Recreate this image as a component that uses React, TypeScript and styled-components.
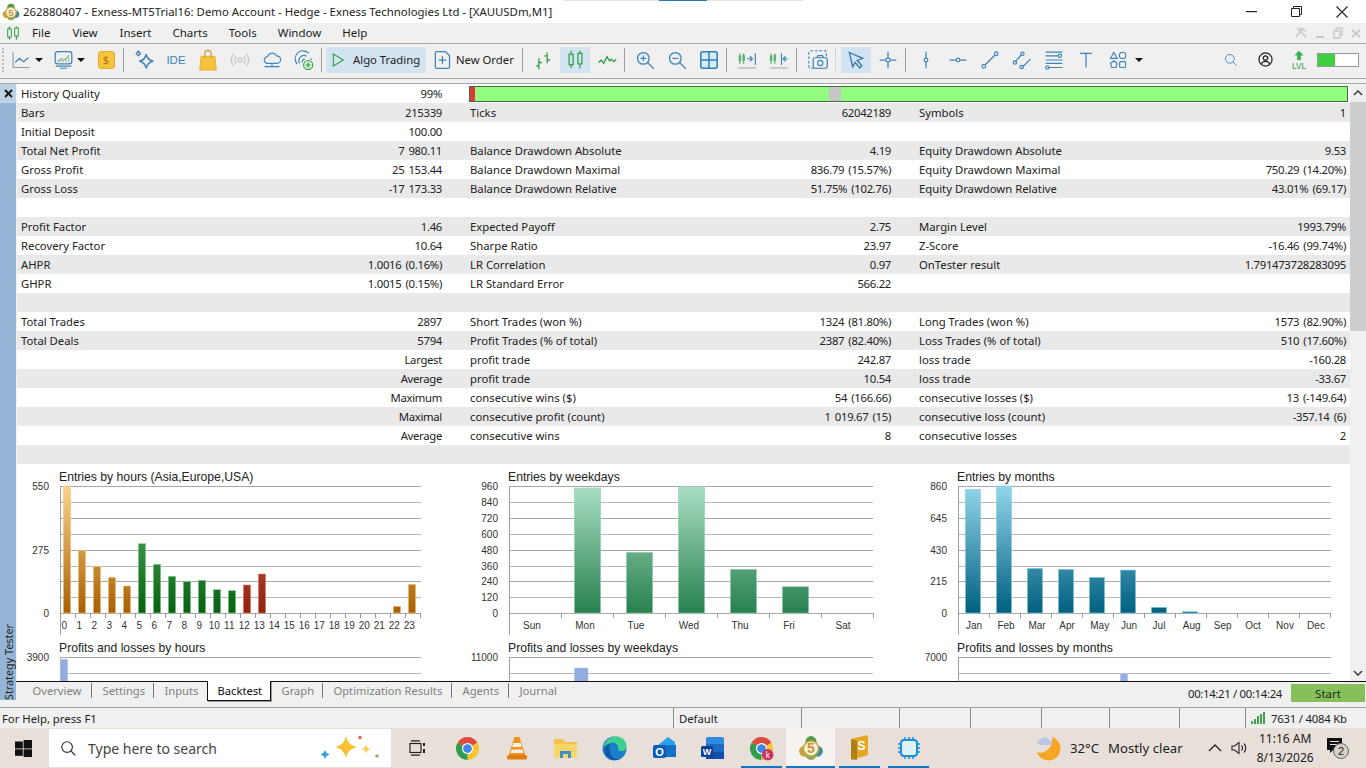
import React from "react";
import styled, { createGlobalStyle } from "styled-components";

const UI_FONT = `"Noto Sans", "Liberation Sans", sans-serif`;
const BLUE = "#3f83b8";
const GREEN = "#2f9e44";

const Global = createGlobalStyle`
    html, body { margin: 0; padding: 0; background: #f0f0f0; }
    body { width: 1366px; height: 768px; overflow: hidden; font-family: ${UI_FONT}; }
`;

const Page = styled.div`
    position: relative;
    display: flex;
    flex-direction: column;
    width: 1366px;
    height: 768px;
    overflow: hidden;
`;

/* leftover of another window along the top edge */
const TopEdge = styled.div`
    position: absolute;
    top: 0;
    left: 563px;
    width: 240px;
    height: 1px;
    background: linear-gradient(90deg, #e4e4e4 40%, #2a7ab8 40%, #2a7ab8 60%, #e4e4e4 60%);
`;

/* Title */
const TitleBar = styled.div`
    display: flex;
    align-items: center;
    height: 23px;
    flex: none;
    background: #fff;
    padding-left: 2px;
`;
const TitleText = styled.span`
    margin-left: 3px;
    font-size: 11.4px;
    color: #222;
    white-space: nowrap;
`;
const WinButtons = styled.div`
    margin-left: auto;
    display: flex;
    padding-right: 2px;
`;
const WinButton = styled.div`
    width: 45px;
    height: 23px;
    display: flex;
    align-items: center;
    justify-content: center;
`;

/* Menu */
const MenuBar = styled.div`
    display: flex;
    align-items: center;
    height: 19px;
    padding: 0 0 1px 7px;
    flex: none;
    background: #f0f0f0;
    border-bottom: 1px solid #a8a8a8;
`;
const MenuItem = styled.span<{ $ml: number }>`
    font-size: 11.5px;
    color: #222;
    margin-left: ${({ $ml }) => $ml}px;
`;
const MdiButtons = styled.div`
    margin-left: auto;
    display: flex;
    align-items: center;
    gap: 8px;
    padding-right: 5px;
`;

/* Toolbar */
const ToolBar = styled.div`
    display: flex;
    align-items: center;
    height: 31px;
    padding-bottom: 3px;
    flex: none;
    background: #f0f0f0;
    border-bottom: 1px solid #a8a8a8;
`;
const Grip = styled.div`
    width: 2px;
    height: 24px;
    margin: 0 2px 0 2px;
    border-left: 2px dotted #bbb;
`;
const ToolButton = styled.div<{ $active?: boolean; $w?: number; $ml?: number }>`
    box-sizing: border-box;
    flex: none;
    width: ${({ $w }) => $w ?? 32}px;
    height: 26px;
    margin-left: ${({ $ml }) => $ml ?? 0}px;
    display: flex;
    align-items: center;
    justify-content: center;
    border: 0 solid transparent;
    border-width: 0 1px;
    background-clip: padding-box;
    background-color: ${({ $active }) => ($active ? "#d2e3f1" : "transparent")};
`;
const Caret = styled.div<{ $w: number }>`
    flex: none;
    width: ${({ $w }) => $w}px;
    display: flex;
    justify-content: center;
    &::before {
        content: "";
        border: 4px solid transparent;
        border-top: 4px solid #111;
        border-bottom: 0;
    }
`;
const Sep = styled.div<{ $dashed?: boolean }>`
    flex: none;
    width: 0;
    height: 24px;
    margin: 0 4px 0 1px;
    border-left: 1px ${({ $dashed }) => ($dashed ? "dotted #bbb" : "solid #a0a0a0")};
`;
const DollarBox = styled.div`
    width: 17px;
    height: 18px;
    border-radius: 3px;
    background: #f8c43e;
    border: 1px solid #e5a92c;
    box-sizing: border-box;
    display: flex;
    align-items: center;
    justify-content: center;
    font-size: 11px;
    color: #a8761c;
`;
const IdeLabel = styled.span`
    font-size: 11.5px;
    color: ${BLUE};
    font-family: "Liberation Sans", sans-serif;
`;
const TextTool = styled.div<{ $active?: boolean; $w: number; $ml: number; $pad: number; $gap: number }>`
    box-sizing: border-box;
    flex: none;
    width: ${({ $w }) => $w}px;
    height: 26px;
    margin-left: ${({ $ml }) => $ml}px;
    padding-left: ${({ $pad }) => $pad}px;
    display: flex;
    align-items: center;
    gap: ${({ $gap }) => $gap}px;
    font-size: 11.3px;
    color: #222;
    white-space: nowrap;
    background: ${({ $active }) => ($active ? "#d2e3f1" : "transparent")};
`;
const RightTools = styled.div`
    margin-left: auto;
    display: flex;
    align-items: center;
    gap: 2px;
    padding-right: 7px;
`;
const LevelBar = styled.div`
    box-sizing: border-box;
    width: 42px;
    height: 14px;
    border: 1px solid #999;
    background: #fff;
    &::before {
        content: "";
        display: block;
        width: 43%;
        height: 100%;
        background: #3ed03e;
    }
`;
const ToolGap = styled.div`
    height: 4px;
    flex: none;
    background: #f0f0f0;
`;

/* Tester */
const Tester = styled.div`
    display: flex;
    height: 623px;
    flex: none;
    border-top: 1px solid #a8a8a8;
    background: #f0f0f0;
`;
const SideStrip = styled.div`
    flex: none;
    width: 16px;
    height: 616px;
    margin-right: 1px;
    background: #95b5d6;
    display: flex;
    flex-direction: column;
    justify-content: space-between;
    align-items: center;
`;
const CloseCell = styled.div`
    width: 16px;
    height: 19px;
    display: flex;
    align-items: center;
    justify-content: center;
    background: #bdd0e4;
`;
const SideLabel = styled.span`
    writing-mode: vertical-rl;
    transform: rotate(180deg);
    font-size: 10.8px;
    color: #222;
    white-space: nowrap;
`;
const TesterBody = styled.div`
    flex: 1;
    min-width: 0;
    display: flex;
    flex-direction: column;
`;
const ReportArea = styled.div`
    display: flex;
    height: 597px;
    flex: none;
    background: #fff;
`;
const Report = styled.div`
    width: 1333px;
    flex: none;
    overflow: hidden;
`;
const Row = styled.div<{ $odd: boolean }>`
    display: grid;
    grid-template-columns: 449px 449px 435px;
    height: 19px;
    background: ${({ $odd }) => ($odd ? "#e9e9e9" : "#fff")};
`;
const Cell = styled.div<{ $last?: boolean }>`
    display: flex;
    justify-content: space-between;
    align-items: center;
    padding: 0 ${({ $last }) => ($last ? 4 : 24)}px 0 4px;
    font-size: 11.3px;
    color: #222;
    white-space: nowrap;
`;
const Value = styled.span`
    letter-spacing: -0.3px;
    word-spacing: 1.5px;
`;
const QualityBar = styled.div`
    grid-column: span 2;
    margin: 2px 2px 1px 3px;
    border: 1px solid #3f6f3f;
    background: linear-gradient(
        90deg,
        #e23a36 0,
        #e23a36 5px,
        #93fb7f 5px,
        #93fb7f 359px,
        #c6c6c6 359px,
        #c6c6c6 371px,
        #93fb7f 371px
    );
`;
const ChartGrid = styled.div`
    display: grid;
    grid-template-columns: 449px 449px 435px;
    grid-auto-rows: 171px;
`;
const ChartSvg = styled.svg`
    display: block;
    font-family: "Liberation Sans", sans-serif;
`;
const ScrollBar = styled.div`
    flex: none;
    width: 16px;
    display: flex;
    flex-direction: column;
    align-items: center;
    justify-content: space-between;
    background: #f0f0f0;
`;
const ScrollThumb = styled.div`
    width: 16px;
    height: 229px;
    margin-top: 1px;
    background: #cdcdcd;
`;
const ScrollArrow = styled.div`
    height: 17px;
    display: flex;
    align-items: center;
    justify-content: center;
`;
const ScrollTop = styled.div`
    display: flex;
    flex-direction: column;
`;

/* Tabs */
const TabBar = styled.div`
    display: flex;
    align-items: flex-start;
    height: 25px;
    flex: none;
    margin-left: -1px;
    border-top: 1px solid #111;
    padding-left: 6px;
    background: #f0f0f0;
`;
const Tab = styled.div<{ $w: number; $current?: boolean; $sep?: boolean }>`
    box-sizing: border-box;
    flex: none;
    width: ${({ $w }) => $w}px;
    height: ${({ $current }) => ($current ? 20 : 15)}px;
    margin-top: ${({ $current }) => ($current ? -1 : 1)}px;
    padding-left: ${({ $current }) => ($current ? 9.5 : 10.5)}px;
    display: flex;
    align-items: center;
    font-size: 11.2px;
    white-space: nowrap;
    color: ${({ $current }) => ($current ? "#111" : "#808080")};
    background: ${({ $current }) => ($current ? "#fff" : "transparent")};
    border-right: 1px solid ${({ $sep }) => ($sep ? "#777" : "transparent")};
    ${({ $current }) => ($current ? "border: 1px solid #111; border-top: 0; box-shadow: 1px 1px 0 #999;" : "")}
`;
const TabRight = styled.div`
    margin-left: auto;
    display: flex;
    align-items: center;
    gap: 9px;
    padding: 2px 1px 0 0;
`;
const Timer = styled.span`
    font-size: 11.3px;
    letter-spacing: -0.3px;
    color: #222;
`;
const StartButton = styled.div`
    width: 74px;
    height: 18px;
    display: flex;
    align-items: center;
    justify-content: center;
    font-size: 11.5px;
    color: #1c2c14;
    background: #87c05a;
`;

/* Status */
const StatusBar = styled.div`
    display: flex;
    height: 20px;
    flex: none;
    background: #f0f0f0;
    border-top: 1px solid #a0a0a0;
`;
const StatusCell = styled.div<{ $w: number }>`
    box-sizing: border-box;
    flex: none;
    width: ${({ $w }) => $w}px;
    display: flex;
    align-items: center;
    gap: 6px;
    padding-left: 5px;
    font-size: 11.3px;
    color: #222;
    white-space: nowrap;
    border-left: 1px solid #8c8c8c;
    &:first-child {
        border-left: 0;
        padding-left: 2px;
    }
`;
const MemoryText = styled.span`
    letter-spacing: -0.2px;
`;

/* Taskbar */
const TaskBar = styled.div`
    display: flex;
    align-items: stretch;
    height: 40px;
    flex: none;
    background: #e8dfd9;
`;
const StartCell = styled.div`
    flex: none;
    width: 49px;
    display: flex;
    align-items: center;
    justify-content: center;
    padding-right: 2px;
    box-sizing: border-box;
`;
const SearchBox = styled.div`
    box-sizing: border-box;
    flex: none;
    width: 342px;
    margin: 1px 0;
    padding: 0 9px 0 11px;
    display: flex;
    align-items: center;
    background: #fff;
    font-size: 14px;
    color: #444;
`;
const SearchText = styled.span`
    margin-left: 11px;
    margin-right: auto;
`;
const TaskSlot = styled.div<{ $w?: number; $open?: boolean; $current?: boolean }>`
    position: relative;
    flex: none;
    width: ${({ $w }) => $w ?? 49}px;
    display: flex;
    align-items: center;
    justify-content: center;
    background: ${({ $current }) => ($current ? "#f6f2ef" : "transparent")};
    &::after {
        content: "";
        display: ${({ $open }) => ($open ? "block" : "none")};
        position: absolute;
        left: ${({ $current }) => ($current ? 0 : 4)}px;
        right: ${({ $current }) => ($current ? 0 : 4)}px;
        bottom: 0;
        height: 2px;
        background: #0a78c8;
    }
`;
const Tray = styled.div`
    flex: 1;
    display: flex;
    align-items: center;
    padding-left: 102px;
    font-size: 13.2px;
    color: #222;
    white-space: nowrap;
`;
const TrayText = styled.span<{ $ml: number }>`
    margin-left: ${({ $ml }) => $ml}px;
`;
const TrayIcon = styled.div<{ $ml: number }>`
    margin-left: ${({ $ml }) => $ml}px;
    display: flex;
    align-items: center;
`;
const Clock = styled.div`
    margin-left: 11px;
    width: 53px;
    display: flex;
    flex-direction: column;
    align-items: center;
    gap: 2px;
    font-size: 12px;
    line-height: 17px;
`;

/* ---------- toolbar icons ---------- */
const Line = ({ d, c = BLUE, w = 1.4 }: { d: string; c?: string; w?: number }) => (
    <path d={d} fill="none" stroke={c} strokeWidth={w} />
);
const Ic = ({ s = 20, children }: { s?: number; children: React.ReactNode }) => (
    <svg width={s} height={s} viewBox="0 0 24 24">{children}</svg>
);

const Mt5Logo = ({ s = 24 }: { s?: number }) => (
    <svg width={s} height={s} viewBox="0 0 24 24">
        <circle cx="6" cy="15" r="5" fill="#c9a33a" />
        <circle cx="18" cy="15" r="5" fill="#3d8f9e" />
        <circle cx="12" cy="6" r="5" fill="#4f9a4a" />
        <circle cx="12" cy="18" r="5" fill="#8aa65a" />
        <circle cx="12" cy="12.5" r="7" fill="#f6f2e6" stroke="#c9a33a" strokeWidth="1.4" />
        <text x="12" y="17" textAnchor="middle" fontSize="13" fontWeight="700" fill="#c8962a" fontFamily="Liberation Sans">5</text>
    </svg>
);
const MenuCandles = () => (
    <svg width="12" height="14" viewBox="0 0 12 14">
        <Line c={GREEN} d="M2.5 .5v13M9.5 .5v13" />
        <rect x=".7" y="3" width="3.6" height="8" fill="#f0f0f0" stroke={GREEN} />
        <rect x="7.7" y="2" width="3.6" height="8" fill="#f0f0f0" stroke={GREEN} />
    </svg>
);
const LineChartIc = () => (
    <Ic s={20}>
        <Line c="#8e9aa5" d="M2.500 3v18h20" />
        <Line d="M5 15l5-5 5 4 6-5" />
    </Ic>
);
const MarketIc = () => (
    <Ic s={21}>
        <rect x="2.5" y="3" width="19" height="14" rx="3" fill="none" stroke={BLUE} strokeWidth="1.4" />
        <Line c="#7fb08a" d="M5.5 14l4-3 3 2 6-6" w={1.2} />
        <Line c="#7fb08a" d="M6 15v-2M9 15v-3M12 15v-2M15 15v-4M18 15v-6" w={1} />
        <Line d="M3 19.5h18M8 22h8" />
    </Ic>
);
const SparkleIc = () => (
    <Ic s={21}>
        <Line w={1.7} d="M14 6c1 5 3 7 8 8-5 1-7 3-8 8-1-5-3-7-8-8 5-1 7-3 8-8z" />
        <Line w={1.5} d="M5 2c.4 2 1 2.8 3 3.2-2 .4-2.6 1-3 3-.4-2-1-2.600-3-3 2-.4 2.6-1.200 3-3.200z" />
    </Ic>
);
const BagIc = () => (
    <Ic s={22}>
        <path d="M4.5 8h15l1.500 15H3z" fill="#f6c33f" stroke="#e6a92a" />
        <Line c="#c99a2a" d="M8.500 10V5a3.500 3.500 0 0 1 7 0v5" w={1.3} />
    </Ic>
);
const SignalOffIc = () => (
    <Ic>
        <circle cx="12" cy="12" r="2.5" fill="none" stroke="#c4c4c4" strokeWidth="1.4" />
        <Line c="#c4c4c4" d="M7.500 7.500a6.500 6.500 0 0 0 0 9M16.500 7.500a6.500 6.500 0 0 1 0 9M4.500 5a10 10 0 0 0 0 14M19.500 5a10 10 0 0 1 0 14" />
    </Ic>
);
const CloudIc = () => (
    <Ic>
        <Line d="M7 16a4 4 0 0 1-.5-8 6 6 0 0 1 11-1 4.500 4.500 0 0 1 .5 9z" />
        <Line d="M3 20h18M12 16v4" />
    </Ic>
);
const VpsIc = () => (
    <Ic>
        <Line d="M4 17a9.500 9.500 0 0 1 14-13M7 16a6 6 0 0 1 8-8.500M10 15a3 3 0 0 1 3-4" />
        <Line d="M20.500 10a9.500 9.500 0 0 1 0 2" />
        <circle cx="17" cy="18" r="5.5" fill="#d6efd6" stroke={GREEN} strokeWidth="1.300" />
        <Line c={GREEN} d="M17 15v6M14 18h6" />
    </Ic>
);
const PlayIc = () => (
    <Ic s={16}><Line c={GREEN} w={1.6} d="M5 3l15 9-15 9z" /></Ic>
);
const OrderIc = () => (
    <Ic s={20}>
        <Line d="M6 2h10l5 5v13a2 2 0 0 1-2 2H6a2 2 0 0 1-2-2V4a2 2 0 0 1 2-2z" w={1.5} />
        <Line d="M12.500 7.500v9M8 12h9" w={1.5} />
    </Ic>
);
const BarsIc = () => (
    <Ic>
        <Line c={GREEN} d="M7 10v13M3.500 19H7M7 15h3.500M17 3v13M13.500 7H17M17 12h3.500" w={1.6} />
    </Ic>
);
const CandlesIc = () => (
    <Ic s={21}>
        <Line c={GREEN} d="M7 2v20M17 2v20" />
        <rect x="4.700" y="6" width="4.6" height="12" fill="#d2e3f1" stroke={GREEN} strokeWidth="1.4" />
        <rect x="14.700" y="5" width="4.6" height="12" fill="#d2e3f1" stroke={GREEN} strokeWidth="1.4" />
    </Ic>
);
const WaveIc = () => (
    <Ic><Line c={GREEN} w={1.6} d="M2 15l3-3 3 4 4-8 3 5 2-2 3 3 3-3" /></Ic>
);
const ZoomIc = ({ plus }: { plus?: boolean }) => (
    <Ic>
        <circle cx="10" cy="10" r="7" fill="none" stroke={BLUE} strokeWidth="1.5" />
        <Line w={1.5} d="M15 15l7.500 7.500" />
        <Line d={plus ? "M10 6.500v7M6.500 10h7" : "M6.500 10h7"} />
    </Ic>
);
const GridIc = () => (
    <svg width="18" height="18" viewBox="0 0 18 18">
        <rect x=".8" y=".8" width="16.4" height="16.4" rx="2" fill="#d8ecf8" stroke="#2f7fb8" strokeWidth="1.5" />
        <Line c="#2f7fb8" w={1.5} d="M9 1v16M1 9h16" />
    </svg>
);
const ShiftIc = ({ back }: { back?: boolean }) => (
    <Ic>
        <g transform={back ? "translate(-1 0)" : "translate(0 0)"}>
            <Line c={GREEN} d="M3.500 4v13M8 4v13" w={1} />
            <rect x="2" y="6.5" width="3" height="7" fill="#5cb06c" />
            <rect x="6.5" y="6" width="3" height="7" fill="#5cb06c" />
        </g>
        {back ? (
            <Line d="M15 4v14M23 10.500h-6M20 7.500l-3 3 3 3" />
        ) : (
            <Line d="M22 4v14M12 10.500h6M15.500 7.500l3 3-3 3" />
        )}
        <Line c="#b0b0b0" d="M1 21.500h22" />
    </Ic>
);
const CameraIc = () => (
    <Ic s={21}>
        <rect x="1" y="2" width="20" height="20" rx="2" fill="none" stroke={BLUE} strokeWidth="1.3" strokeDasharray="3 2" />
        <rect x="6" y="10" width="16" height="12" rx="2" fill="#f0f0f0" stroke={BLUE} strokeWidth="1.4" />
        <Line d="M10 10l1.500-2.500h5L18 10" />
        <circle cx="14" cy="16" r="3" fill="none" stroke={BLUE} strokeWidth="1.3" />
    </Ic>
);
const CursorIc = () => (
    <Ic><path d="M4 3l16 7-6.500 2.500 5.500 6.500-2.500 2.500-5.500-6.500L8 20z" fill="#d2e3f1" stroke="#3a78aa" strokeWidth="1.6" /></Ic>
);
const CrossIc = () => (
    <Ic>
        <Line d="M12 2v7M12 15v7M2 12h7M15 12h7" w={1.5} />
        <circle cx="12" cy="12" r="2.5" fill="none" stroke={BLUE} strokeWidth="1.4" />
    </Ic>
);
const VLineIc = () => (
    <Ic>
        <Line d="M12 2v8M12 14v8" w={1.5} />
        <circle cx="12" cy="12" r="2.2" fill="none" stroke={BLUE} strokeWidth="1.4" />
    </Ic>
);
const HLineIc = () => (
    <Ic>
        <Line d="M2 12h8M14 12h8" w={1.5} />
        <circle cx="12" cy="12" r="2.2" fill="none" stroke={BLUE} strokeWidth="1.4" />
    </Ic>
);
const TrendIc = () => (
    <Ic>
        <Line d="M6 18L18 6" w={1.5} />
        <circle cx="4.5" cy="19.5" r="2.2" fill="none" stroke={BLUE} strokeWidth="1.4" />
        <circle cx="19.5" cy="4.5" r="2.2" fill="none" stroke={BLUE} strokeWidth="1.4" />
    </Ic>
);
const ChannelIc = () => (
    <Ic>
        <Line d="M4 14l7-8M13 20l9-9" w={1.5} />
        <circle cx="3.5" cy="15" r="2" fill="none" stroke={BLUE} strokeWidth="1.4" />
        <circle cx="12.5" cy="4.5" r="2" fill="none" stroke={BLUE} strokeWidth="1.4" />
        <circle cx="11.5" cy="20.5" r="2" fill="none" stroke={BLUE} strokeWidth="1.4" />
    </Ic>
);
const FiboIc = () => (
    <Ic>
        <Line d="M2 2.500h20M2 7h15M2 12h20M2 16h20M6 21h16" />
        <circle cx="19" cy="7" r="2" fill="#f0f0f0" stroke={BLUE} strokeWidth="1.4" />
        <circle cx="4" cy="21" r="2" fill="#f0f0f0" stroke={BLUE} strokeWidth="1.4" />
    </Ic>
);
const TextIc = () => (
    <Ic><Line d="M5 4h14M12 4v17" w={1.5} /></Ic>
);
const ShapesIc = () => (
    <Ic>
        <Line d="M7 3l4 7H3z" />
        <circle cx="17.5" cy="6.5" r="3.8" fill="none" stroke={BLUE} strokeWidth="1.4" />
        <Line d="M7 13l4 3-1.500 5h-5L3 16z" />
        <rect x="14" y="14" width="7" height="7" rx="1" fill="none" stroke={BLUE} strokeWidth="1.4" />
    </Ic>
);
const SearchIc = ({ c = "#4a8fc0", s = 14 }: { c?: string; s?: number }) => (
    <Ic s={s}>
        <circle cx="10" cy="10" r="7.500" fill="none" stroke={c} strokeWidth="1.7" />
        <Line c={c} w={1.7} d="M15.500 15.500l6 6" />
    </Ic>
);
const UserIc = () => (
    <Ic s={15}>
        <circle cx="12" cy="12" r="10.500" fill="none" stroke="#222" strokeWidth="2" />
        <circle cx="12" cy="9.500" r="3.500" fill="none" stroke="#222" strokeWidth="2" />
        <Line c="#222" w={2} d="M5.500 19c1.500-3.500 3.500-4 6.500-4s5 .5 6.500 4" />
    </Ic>
);
const LvlIc = () => (
    <svg width="22" height="22" viewBox="0 0 24 24">
        <path d="M12 2l5 5h-3v5h-4V7H7z" fill="#36b24a" />
        <text x="12" y="22" textAnchor="middle" fontSize="9" fill="#2f9e44" fontFamily="Liberation Sans">LVL</text>
    </svg>
);

/* ---------- taskbar icons ---------- */
const WindowsIc = () => (
    <svg width="17" height="17" viewBox="0 0 17 17" fill="#111">
        <rect x="0" y="1.5" width="7.8" height="7" />
        <rect x="8.6" y="0" width="8.4" height="8.5" />
        <rect x="0" y="9.3" width="7.8" height="6.500" />
        <rect x="8.6" y="9.3" width="8.4" height="7.700" />
    </svg>
);
const Sparkles = () => (
    <svg width="62" height="26" viewBox="0 0 62 26">
        <path d="M26 0c1 7 4 10 11 12-7 2-10 5-11 12-1-7-4-10-11-12 7-2 10-5 11-12z" fill="#f8c22e" />
        <path d="M46 9c.5 3 2 4.500 5 5-3 .5-4.500 2-5 5-.5-3-2-4.500-5-5 3-.5 4.500-2 5-5z" fill="#f8cf5c" />
        <path d="M5 15l1.500 3 3 1.500-3 1.500L5 24l-1.500-3-3-1.500 3-1.500z" fill="#2f9fd8" />
        <circle cx="40" cy="2.5" r="1.8" fill="#d8684c" />
        <circle cx="57" cy="21" r="1.8" fill="#8fb070" />
    </svg>
);
const TaskViewIc = () => (
    <svg width="16" height="16" viewBox="0 0 16 16">
        <Line c="#222" w={1.2} d="M2 .8h9M2 15.200h9" />
        <rect x="1" y="3.5" width="11" height="9" fill="none" stroke="#222" strokeWidth="1.2" />
        <Line c="#222" w={2} d="M15 3v3M15 9v4" />
    </svg>
);
const ChromeIc = ({ badge }: { badge?: boolean }) => (
    <svg width="25" height="25" viewBox="0 0 24 24">
        <path d="M12 12L2.47 6.5A11 11 0 0 1 21.53 6.5z" fill="#dd4b3e" />
        <path d="M12 12L21.53 6.5A11 11 0 0 1 12 23z" fill="#f7c531" />
        <path d="M12 12L12 23A11 11 0 0 1 2.47 6.5z" fill="#2f9e4f" />
        <circle cx="12" cy="12" r="5.3" fill="#fff" />
        <circle cx="12" cy="12" r="4.2" fill="#3f86e8" />
        {badge && <circle cx="18" cy="18" r="5.5" fill="#c9305f" />}
        {badge && <text x="18" y="21" textAnchor="middle" fontSize="8" fill="#fff" fontFamily="Liberation Sans">k</text>}
    </svg>
);
const VlcIc = () => (
    <svg width="22" height="25" viewBox="0 0 22 25">
        <path d="M8.500 1h5l6 19h-17z" fill="#f29318" />
        <path d="M7.300 7h7.400l1.100 4H6.200zM5.500 13.500h11l1 3.500h-13z" fill="#f4f0ea" />
        <rect x="1" y="19" width="20" height="4.5" rx="1.5" fill="#e07c10" />
    </svg>
);
const FolderIc = () => (
    <svg width="23" height="20" viewBox="0 0 23 20">
        <path d="M0 1h9l2 3h12v5H0z" fill="#f2c14e" />
        <rect x="0" y="6" width="23" height="14" fill="#fad668" />
        <path d="M6 13h11v7h-3v-4H9v4H6z" fill="#3c8fc8" />
    </svg>
);
const EdgeIc = () => (
    <svg width="25" height="25" viewBox="0 0 24 24">
        <circle cx="12" cy="12" r="11.5" fill="#1a7fc8" />
        <path d="M1 11C3 3 10 .5 14 .5c6 0 9.500 5 9.500 9.500 0 3-2 4.500-5 4.500-2 0-3.500-1-3-2.500C16 8 12 5.500 8.500 6.500 5 7.500 2 9.500 1 11z" fill="#3fcf8e" />
        <path d="M8 15c0 4 4 7 9 7-6 3-14 0-15-9 1-3 3-5 6-5.500-2 2-1 5 0 7.500z" fill="#0f5aa8" />
    </svg>
);
const OutlookIc = () => (
    <svg width="24" height="24" viewBox="0 0 24 24">
        <path d="M6 9l10-8 7 5v6H6z" fill="#29a3e8" />
        <rect x="9" y="9" width="15" height="12" fill="#1470c8" />
        <rect x="1" y="9" width="13" height="13" rx="2" fill="#0c5db4" />
        <text x="7.5" y="19.5" textAnchor="middle" fontSize="11" fontWeight="700" fill="#fff" fontFamily="Liberation Sans">O</text>
    </svg>
);
const WordIc = () => (
    <svg width="24" height="24" viewBox="0 0 24 24">
        <rect x="5" y="1" width="18" height="22" rx="2" fill="#2f8ae0" />
        <rect x="5" y="8" width="18" height="7.5" fill="#1a6cc8" />
        <rect x="5" y="15.5" width="18" height="7.5" fill="#124fa8" />
        <rect x="0" y="10" width="12" height="11" rx="1.5" fill="#0d3f94" />
        <text x="6" y="19" textAnchor="middle" fontSize="9" fontWeight="700" fill="#fff" fontFamily="Liberation Sans">W</text>
    </svg>
);
const SublimeIc = () => (
    <svg width="20" height="26" viewBox="0 0 20 26">
        <path d="M1 4l17-4v20l-17 5z" fill="#e3a81f" />
        <path d="M1 4l6 2v19l-6-1z" fill="#b07f14" />
        <text x="11.5" y="15" textAnchor="middle" fontSize="12" fontWeight="700" fill="#fff" fontFamily="Liberation Sans">S</text>
    </svg>
);
const ChipIc = () => (
    <svg width="24" height="24" viewBox="0 0 24 24">
        <rect x="4" y="4" width="16" height="16" rx="3" fill="#dff1fb" stroke="#1c8fd8" strokeWidth="2" />
        <Line c="#1c8fd8" w={1.5} d="M8 1v3M12 1v3M16 1v3M8 20v3M12 20v3M16 20v3M1 8h3M1 12h3M1 16h3M20 8h3M20 12h3M20 16h3" />
    </svg>
);
const WeatherIc = () => (
    <svg width="28" height="28" viewBox="0 0 28 28">
        <path d="M17 3a12 12 0 1 1-15 15c7 3 17-4 15-15z" fill="#f5a623" />
        <path d="M5 11a3 3 0 0 1 1-6 4.500 4.500 0 0 1 8 1 2.500 2.500 0 0 1 1 5z" fill="#b8c8e0" />
    </svg>
);
const SignalBars = () => (
    <svg width="14" height="12" viewBox="0 0 14 12" fill="#3fa34d">
        <rect x="0" y="9" width="2" height="3" />
        <rect x="3" y="7" width="2" height="5" />
        <rect x="6" y="4" width="2" height="8" />
        <rect x="9" y="2" width="2" height="10" />
        <rect x="12" y="0" width="2" height="12" />
    </svg>
);
const NotifyIc = () => (
    <svg width="26" height="24" viewBox="0 0 26 24">
        <path d="M1 2h15v12H7l-3 3v-3H1z" fill="#111" />
        <Line c="#e8dfd9" w={1} d="M4 5.500h9M4 8.500h9" />
        <circle cx="15" cy="15" r="7.5" fill="#d8d0ca" stroke="#666" />
        <text x="15" y="19" textAnchor="middle" fontSize="11" fill="#222" fontFamily="Liberation Sans">2</text>
    </svg>
);

/* ---------- report data ---------- */
const ROWS: string[][] = [
    ["History Quality", "99%"],
    ["Bars", "215339", "Ticks", "62042189", "Symbols", "1"],
    ["Initial Deposit", "100.00", "", "", "", ""],
    ["Total Net Profit", "7 980.11", "Balance Drawdown Absolute", "4.19", "Equity Drawdown Absolute", "9.53"],
    ["Gross Profit", "25 153.44", "Balance Drawdown Maximal", "836.79 (15.57%)", "Equity Drawdown Maximal", "750.29 (14.20%)"],
    ["Gross Loss", "-17 173.33", "Balance Drawdown Relative", "51.75% (102.76)", "Equity Drawdown Relative", "43.01% (69.17)"],
    ["", "", "", "", "", ""],
    ["Profit Factor", "1.46", "Expected Payoff", "2.75", "Margin Level", "1993.79%"],
    ["Recovery Factor", "10.64", "Sharpe Ratio", "23.97", "Z-Score", "-16.46 (99.74%)"],
    ["AHPR", "1.0016 (0.16%)", "LR Correlation", "0.97", "OnTester result", "1.791473728283095"],
    ["GHPR", "1.0015 (0.15%)", "LR Standard Error", "566.22", "", ""],
    ["", "", "", "", "", ""],
    ["Total Trades", "2897", "Short Trades (won %)", "1324 (81.80%)", "Long Trades (won %)", "1573 (82.90%)"],
    ["Total Deals", "5794", "Profit Trades (% of total)", "2387 (82.40%)", "Loss Trades (% of total)", "510 (17.60%)"],
    ["", "Largest", "profit trade", "242.87", "loss trade", "-160.28"],
    ["", "Average", "profit trade", "10.54", "loss trade", "-33.67"],
    ["", "Maximum", "consecutive wins ($)", "54 (166.66)", "consecutive losses ($)", "13 (-149.64)"],
    ["", "Maximal", "consecutive profit (count)", "1 019.67 (15)", "consecutive loss (count)", "-357.14 (6)"],
    ["", "Average", "consecutive wins", "8", "consecutive losses", "2"],
    ["", "", "", "", "", ""],
];

const GRID_Y = [22, 38, 54, 70, 86, 102, 117, 133, 149, 165, 181];
const AX = 43;
const BOTTOM = 149;

interface Bar { x: number; w: number; top: number; fill: string }
interface ChartProps {
    id: string;
    title: string;
    right: number;
    step: number;
    yLabels: [string, number][];
    xLabels?: [string, number][];
    bars: Bar[];
    stops: Record<string, [string, string]>;
    outline: Record<string, string>;
}

const Chart: React.FC<ChartProps> = ({ id, title, right, step, yLabels, xLabels, bars, stops, outline }) => {
    const ticks: number[] = [];
    for (let x = AX; x <= right; x += step) ticks.push(x);
    return (
        <ChartSvg width="435" height="171" viewBox="0 0 435 171">
            <defs>
                {Object.entries(stops).map(([k, [a, b]]) => (
                    <linearGradient key={k} id={`${id}-${k}`} gradientUnits="userSpaceOnUse" x1="0" x2="0" y1="22" y2="149">
                        <stop offset="0" stopColor={a} />
                        <stop offset="1" stopColor={b} />
                    </linearGradient>
                ))}
            </defs>
            <text x={AX - 1} y="17" fontSize="12.2" fill="#222">{title}</text>
            {GRID_Y.filter((y) => xLabels ? y <= BOTTOM : true).map((y, i) => (
                <line key={y} x1={AX} x2={right} y1={y + 0.5} y2={y + 0.5} stroke={i % 2 ? "#b8b8b8" : "#a8a8a8"} />
            ))}
            <line x1={AX + 0.5} x2={AX + 0.5} y1="22" y2="171" stroke="#a0a0a0" />
            {xLabels && ticks.map((x) => (
                <line key={x} x1={x + 0.5} x2={x + 0.5} y1="149" y2="154" stroke="#999" />
            ))}
            {bars.map((b, i) => (
                <rect key={i} x={b.x} y={b.top} width={b.w} height={(xLabels ? BOTTOM : 171) - b.top}
                    fill={`url(#${id}-${b.fill})`} stroke={outline[b.fill]} strokeWidth="0.6" />
            ))}
            {yLabels.map(([t, y]) => (
                <text key={t} x="32" y={y + 3.5} fontSize="10" textAnchor="end" fill="#333">{t}</text>
            ))}
            {xLabels && xLabels.map(([t, x]) => (
                <text key={t} x={x} y="165" fontSize="10" textAnchor="middle" fill="#333">{t}</text>
            ))}
        </ChartSvg>
    );
};

const HOUR_TOPS: [number, number, string][] = [
    [0, 22, "o"], [1, 86.7, "o"], [2, 102.7, "o"], [3, 113.3, "o"], [4, 122, "o"],
    [5, 79.7, "g"], [6, 100.3, "g"], [7, 112.3, "g"], [8, 117.7, "g"], [9, 116.3, "g"],
    [10, 125.7, "g"], [11, 126.7, "g"], [12, 121, "r"], [13, 110, "r"], [22, 142.3, "o"], [23, 120.3, "o"],
];
const hourBars: Bar[] = HOUR_TOPS.map(([i, top, fill]) => ({ x: AX + 15 * i + 3.3, w: 7.4, top, fill }));
const dayBars: Bar[] = ([[1, 24], [2, 88.3], [3, 22.7], [4, 105.3], [5, 122.7]] as [number, number][]).map(
    ([i, top]) => ({ x: AX + 52 * i + 13.3, w: 26.4, top, fill: "a" })
);
const monthBars: Bar[] = ([[0, 25.3], [1, 22], [2, 104.3], [3, 105.3], [4, 113.3], [5, 106], [6, 143.3], [7, 147.7]] as [number, number][]).map(
    ([i, top]) => ({ x: AX + 31 * i + 7.3, w: 15.4, top, fill: "a" })
);

const HOURS = Array.from({ length: 24 }, (_, i) => [String(i), 47.3 + 15 * i] as [string, number]);
const DAYS: [string, number][] = [["Sun", 66], ["Mon", 119], ["Tue", 170], ["Wed", 223], ["Thu", 274], ["Fri", 323], ["Sat", 377]];
const MONTHS: [string, number][] = [
    ["Jan", 59], ["Feb", 91], ["Mar", 122], ["Apr", 152], ["May", 184.7], ["Jun", 214],
    ["Jul", 244], ["Aug", 276.7], ["Sep", 307.7], ["Oct", 338], ["Nov", 370], ["Dec", 401],
];
const BLUE_FILL: Record<string, [string, string]> = { a: ["#93abdf", "#93abdf"] };
const BLUE_EDGE = { a: "#b6c6e8" };

const TABS: { t: string; w: number; sep?: boolean; current?: boolean }[] = [
    { t: "Overview", w: 70, sep: true },
    { t: "Settings", w: 62, sep: true },
    { t: "Inputs", w: 53 },
    { t: "Backtest", w: 64, current: true },
    { t: "Graph", w: 52, sep: true },
    { t: "Optimization Results", w: 129, sep: true },
    { t: "Agents", w: 57, sep: true },
    { t: "Journal", w: 60 },
];
const STATUS = [673, 128, 98, 71, 71, 68, 70, 66, 121];
const MENU: [string, number][] = [["File", 13], ["View", 22], ["Insert", 22], ["Charts", 21], ["Tools", 21], ["Window", 21], ["Help", 21]];

const App: React.FC = () => (
    <Page>
        <Global />
        <TitleBar>
            <Mt5Logo s={18} />
            <TitleText>262880407 - Exness-MT5Trial16: Demo Account - Hedge - Exness Technologies Ltd - [XAUUSDm,M1]</TitleText>
            <WinButtons>
                <WinButton>
                    <svg width="11" height="2"><rect width="11" height="1.2" fill="#222" /></svg>
                </WinButton>
                <WinButton>
                    <svg width="11" height="11" viewBox="0 0 11 11"><Line c="#222" w={1} d="M.5 2.500h8v8h-8zM2.500 2.500v-2h8v8h-2" /></svg>
                </WinButton>
                <WinButton>
                    <svg width="12" height="12" viewBox="0 0 12 12"><Line c="#222" w={1.1} d="M.5 .5l11 11M11.500 .5l-11 11" /></svg>
                </WinButton>
            </WinButtons>
        </TitleBar>
        <TopEdge />
        <MenuBar>
            <MenuCandles />
            {MENU.map(([t, ml]) => <MenuItem key={t} $ml={ml}>{t}</MenuItem>)}
            <MdiButtons>
                <svg width="12" height="12" viewBox="0 0 12 12"><Line c="#c8c8c8" w={1.6} d="M2 1l9 9M8 1L1 10M5 1l6 3" /></svg>
                <svg width="10" height="12" viewBox="0 0 10 12"><Line c="#c8c8c8" w={2} d="M1 10h8" /></svg>
                <svg width="10" height="12" viewBox="0 0 10 12"><Line c="#c8c8c8" d="M1 4h6v7H1zM3 4V1h6v7H7" /></svg>
                <svg width="10" height="12" viewBox="0 0 10 12"><Line c="#c8c8c8" w={1.8} d="M1 3l8 7M9 3l-8 7" /></svg>
            </MdiButtons>
        </MenuBar>
        <ToolBar>
            <Grip />
            <ToolButton $w={26}><LineChartIc /></ToolButton>
            <Caret $w={10} />
            <ToolButton $w={26} $ml={6}><MarketIc /></ToolButton>
            <Caret $w={10} />
            <ToolButton $ml={4}><DollarBox>$</DollarBox></ToolButton>
            <Sep />
            <ToolButton><SparkleIc /></ToolButton>
            <ToolButton><IdeLabel>IDE</IdeLabel></ToolButton>
            <ToolButton><BagIc /></ToolButton>
            <ToolButton><SignalOffIc /></ToolButton>
            <ToolButton><CloudIc /></ToolButton>
            <ToolButton><VpsIc /></ToolButton>
            <Sep />
            <TextTool $active $w={100} $ml={0} $pad={4} $gap={7}><PlayIc /><span>Algo Trading</span></TextTool>
            <TextTool $w={92} $ml={3} $pad={3} $gap={4}><OrderIc /><span>New Order</span></TextTool>
            <Sep />
            <ToolButton><BarsIc /></ToolButton>
            <ToolButton $active><CandlesIc /></ToolButton>
            <ToolButton><WaveIc /></ToolButton>
            <Sep />
            <ToolButton><ZoomIc plus /></ToolButton>
            <ToolButton><ZoomIc /></ToolButton>
            <ToolButton><GridIc /></ToolButton>
            <Sep />
            <ToolButton><ShiftIc /></ToolButton>
            <ToolButton><ShiftIc back /></ToolButton>
            <Sep />
            <ToolButton $ml={1}><CameraIc /></ToolButton>
            <Sep $dashed />
            <ToolButton $active><CursorIc /></ToolButton>
            <ToolButton><CrossIc /></ToolButton>
            <Sep />
            <ToolButton><VLineIc /></ToolButton>
            <ToolButton><HLineIc /></ToolButton>
            <ToolButton><TrendIc /></ToolButton>
            <ToolButton><ChannelIc /></ToolButton>
            <ToolButton><FiboIc /></ToolButton>
            <ToolButton><TextIc /></ToolButton>
            <ToolButton><ShapesIc /></ToolButton>
            <Caret $w={9} />
            <RightTools>
                <ToolButton><SearchIc /></ToolButton>
                <ToolButton><UserIc /></ToolButton>
                <ToolButton><LvlIc /></ToolButton>
                <LevelBar />
            </RightTools>
        </ToolBar>
        <ToolGap />
        <Tester>
            <SideStrip>
                <CloseCell>
                    <svg width="9" height="9" viewBox="0 0 9 9"><Line c="#111" w={1.8} d="M1 1l7 7M8 1L1 8" /></svg>
                </CloseCell>
                <SideLabel>Strategy Tester</SideLabel>
            </SideStrip>
            <TesterBody>
                <ReportArea>
                    <Report>
                        {ROWS.map((r, i) => (
                            <Row key={i} $odd={i % 2 === 1}>
                                <Cell><span>{r[0]}</span><Value>{r[1]}</Value></Cell>
                                {i === 0 ? (
                                    <QualityBar />
                                ) : (
                                    <>
                                        <Cell><span>{r[2]}</span><Value>{r[3]}</Value></Cell>
                                        <Cell $last><span>{r[4]}</span><Value>{r[5]}</Value></Cell>
                                    </>
                                )}
                            </Row>
                        ))}
                        <ChartGrid>
                            <Chart id="c1" title="Entries by hours (Asia,Europe,USA)" right={404} step={15}
                                yLabels={[["550", 22], ["275", 86], ["0", 149]]} xLabels={HOURS} bars={hourBars}
                                stops={{ o: ["#fdd38c", "#a86000"], g: ["#62b872", "#07610f"], r: ["#d8684c", "#92220a"] }}
                                outline={{ o: "#f4c98a", g: "#8ccc98", r: "#dc9080" }} />
                            <Chart id="c2" title="Entries by weekdays" right={407} step={52}
                                yLabels={[["960", 22], ["840", 38], ["720", 54], ["600", 70], ["480", 86], ["360", 102], ["240", 117], ["120", 133], ["0", 149]]}
                                xLabels={DAYS} bars={dayBars}
                                stops={{ a: ["#aadfc4", "#27804f"] }} outline={{ a: "#9ad4b8" }} />
                            <Chart id="c3" title="Entries by months" right={416} step={31}
                                yLabels={[["860", 22], ["645", 54], ["430", 86], ["215", 117], ["0", 149]]}
                                xLabels={MONTHS} bars={monthBars}
                                stops={{ a: ["#92d6ea", "#005f80"] }} outline={{ a: "#8cd8ec" }} />
                            <Chart id="c4" title="Profits and losses by hours" right={404} step={15}
                                yLabels={[["3900", 22]]} bars={[{ x: 43.3, w: 7.4, top: 24.3, fill: "a" }]}
                                stops={BLUE_FILL} outline={BLUE_EDGE} />
                            <Chart id="c5" title="Profits and losses by weekdays" right={407} step={52}
                                yLabels={[["11000", 22]]} bars={[{ x: 108.3, w: 13.7, top: 33, fill: "a" }]}
                                stops={BLUE_FILL} outline={BLUE_EDGE} />
                            <Chart id="c6" title="Profits and losses by months" right={416} step={31}
                                yLabels={[["7000", 22]]} bars={[{ x: 205.3, w: 7.4, top: 39, fill: "a" }]}
                                stops={BLUE_FILL} outline={BLUE_EDGE} />
                        </ChartGrid>
                    </Report>
                    <ScrollBar>
                        <ScrollTop>
                            <ScrollArrow>
                                <svg width="10" height="6" viewBox="0 0 10 6"><Line c="#444" w={1.6} d="M1 5l4-4 4 4" /></svg>
                            </ScrollArrow>
                            <ScrollThumb />
                        </ScrollTop>
                        <ScrollArrow>
                            <svg width="10" height="6" viewBox="0 0 10 6"><Line c="#444" w={1.6} d="M1 1l4 4 4-4" /></svg>
                        </ScrollArrow>
                    </ScrollBar>
                </ReportArea>
                <TabBar>
                    {TABS.map((t) => (
                        <Tab key={t.t} $w={t.w} $sep={t.sep} $current={t.current}>{t.t}</Tab>
                    ))}
                    <TabRight>
                        <Timer>00:14:21 / 00:14:24</Timer>
                        <StartButton>Start</StartButton>
                    </TabRight>
                </TabBar>
            </TesterBody>
        </Tester>
        <StatusBar>
            {STATUS.map((w, i) => (
                <StatusCell key={i} $w={w}>
                    {i === 0 && "For Help, press F1"}
                    {i === 1 && "Default"}
                    {i === 8 && <><SignalBars /><MemoryText>7631 / 4084 Kb</MemoryText></>}
                </StatusCell>
            ))}
        </StatusBar>
        <TaskBar>
            <StartCell><WindowsIc /></StartCell>
            <SearchBox>
                <SearchIc c="#333" s={17} />
                <SearchText>Type here to search</SearchText>
                <Sparkles />
            </SearchBox>
            <TaskSlot $w={52}><TaskViewIc /></TaskSlot>
            <TaskSlot><ChromeIc /></TaskSlot>
            <TaskSlot><VlcIc /></TaskSlot>
            <TaskSlot><FolderIc /></TaskSlot>
            <TaskSlot><EdgeIc /></TaskSlot>
            <TaskSlot><OutlookIc /></TaskSlot>
            <TaskSlot><WordIc /></TaskSlot>
            <TaskSlot $open><ChromeIc badge /></TaskSlot>
            <TaskSlot $open $current><Mt5Logo s={26} /></TaskSlot>
            <TaskSlot $open><SublimeIc /></TaskSlot>
            <TaskSlot $open><ChipIc /></TaskSlot>
            <Tray>
                <WeatherIc />
                <TrayText $ml={7}>32°C</TrayText>
                <TrayText $ml={9}>Mostly clear</TrayText>
                <TrayIcon $ml={25}>
                    <svg width="14" height="8" viewBox="0 0 14 8"><Line c="#222" w={1.3} d="M1 7l6-6 6 6" /></svg>
                </TrayIcon>
                <TrayIcon $ml={9}>
                    <svg width="17" height="14" viewBox="0 0 17 14"><Line c="#222" w={1.1} d="M1 5h2.500L8 1.500v11L3.500 9H1zM10.500 4.500a3.500 3.500 0 0 1 0 5M13 2.500a6.500 6.500 0 0 1 0 9" /></svg>
                </TrayIcon>
                <Clock><span>11:16 AM</span><span>8/13/2026</span></Clock>
                <TrayIcon $ml={14}><NotifyIc /></TrayIcon>
            </Tray>
        </TaskBar>
    </Page>
);

export default App;
